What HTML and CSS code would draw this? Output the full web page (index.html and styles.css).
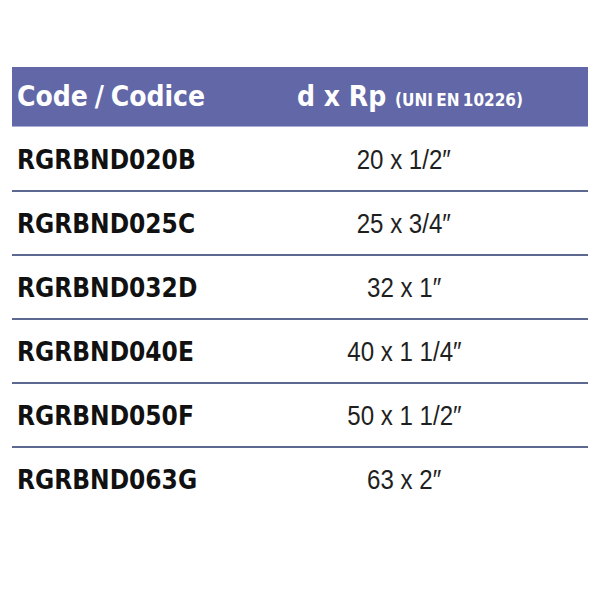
FILE: index.html
```html
<!DOCTYPE html>
<html>
<head>
<meta charset="utf-8">
<link rel="stylesheet" href="styles.css">
</head>
<body>
<div class="page">
  <div class="table">
    <div class="head">
      <div class="c1">Code / Codice</div>
      <div class="c2">d x Rp <span class="small">(UNI EN 10226)</span></div>
    </div>
    <div class="row"><div class="c1 code">RGRBND020B</div><div class="c2"><span class="val">20 x 1/2&Prime;</span></div></div>
    <div class="row"><div class="c1 code">RGRBND025C</div><div class="c2"><span class="val">25 x 3/4&Prime;</span></div></div>
    <div class="row"><div class="c1 code">RGRBND032D</div><div class="c2"><span class="val">32 x 1&Prime;</span></div></div>
    <div class="row"><div class="c1 code">RGRBND040E</div><div class="c2"><span class="val">40 x 1 1/4&Prime;</span></div></div>
    <div class="row"><div class="c1 code">RGRBND050F</div><div class="c2"><span class="val">50 x 1 1/2&Prime;</span></div></div>
    <div class="row last"><div class="c1 code">RGRBND063G</div><div class="c2"><span class="val">63 x 2&Prime;</span></div></div>
  </div>
</div>
</body>
</html>
```
FILE: styles.css
```css
html, body {
  margin: 0;
  padding: 0;
  background: #ffffff;
}
.page {
  width: 600px;
  height: 600px;
  padding-top: 67px;
  box-sizing: border-box;
  font-family: "DejaVu Sans Condensed", "DejaVu Sans", sans-serif;
  font-stretch: condensed;
}
.table {
  margin: 0 12px;
  width: 576px;
}
.head {
  display: grid;
  grid-template-columns: 208px 1fr;
  height: 59px;
  align-items: center;
  background: #6267a8;
  color: #ffffff;
  font-weight: bold;
  font-size: 28px;
  border-bottom: 1px solid #a9acd6;
  margin-bottom: 1px;
}
.head .c1 {
  padding-left: 5px;
  word-spacing: -2px;
}
.head .c2 {
  text-align: center;
  padding-left: 12px;
}
.small {
  font-size: 17px;
  word-spacing: -2px;
}
.row {
  display: grid;
  grid-template-columns: 208px 1fr;
  height: 60px;
  align-items: center;
  border-bottom: 2px solid #5d6890;
  padding-top: 2px;
}
.row.last {
  border-bottom: none;
}
.code {
  padding-left: 5px;
  font-weight: bold;
  font-size: 26px;
  color: #111111;
}
.c2 {
  text-align: center;
}
.val {
  display: inline-block;
  font-family: "Liberation Sans", Arial, sans-serif;
  font-size: 28px;
  color: #1f1f1f;
  transform: scaleX(0.86);
}
```
